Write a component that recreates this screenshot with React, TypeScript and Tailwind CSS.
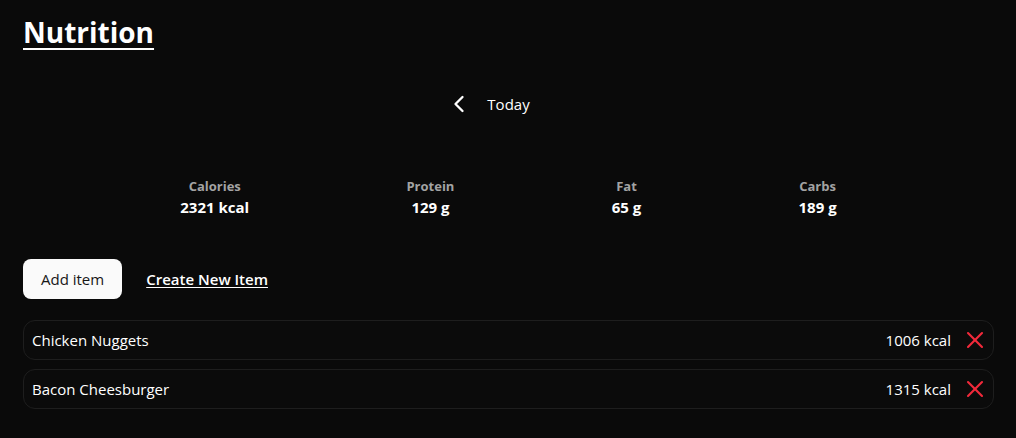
import { ChevronLeft, ChevronRight, X } from "lucide-react";

const stats = [
  { label: "Calories", value: "2321 kcal" },
  { label: "Protein", value: "129 g" },
  { label: "Fat", value: "65 g" },
  { label: "Carbs", value: "189 g" },
];

const items = [
  { name: "Chicken Nuggets", kcal: 1006 },
  { name: "Bacon Cheesburger", kcal: 1315 },
];

export default function App() {
  return (
    <div
      className="min-h-screen bg-[#0a0a0a] text-white pl-[23px] pr-[22px] pt-[12px]"
      style={{ fontFamily: '"Segoe UI", "Open Sans", sans-serif' }}
    >
      <h1 className="text-[28px] font-bold underline underline-offset-[5px] decoration-2 leading-[40px]">
        Nutrition
      </h1>

      <div className="flex items-center justify-center gap-[14px] mt-[40px] h-6">
        <button className="text-white">
          <ChevronLeft size={28} strokeWidth={2} />
        </button>
        <span className="text-[15px]">Today</span>
        {/* no next day when viewing today */}
        <span className="invisible">
          <ChevronRight size={28} />
        </span>
      </div>

      <div className="flex justify-evenly mt-[60px]">
        {stats.map((s) => (
          <div key={s.label} className="flex flex-col items-center">
            <span className="text-[13px] font-bold text-[#a3a3a3] leading-[20px]">
              {s.label}
            </span>
            <span className="text-[15px] font-bold leading-[22px]">
              {s.value}
            </span>
          </div>
        ))}
      </div>

      <div className="flex items-center gap-6 mt-[41px]">
        <button className="bg-[#fafafa] text-[#171717] rounded-lg h-10 px-[18px] text-[15px] font-medium">
          Add item
        </button>
        <a className="text-[15px] font-semibold underline underline-offset-2">
          Create New Item
        </a>
      </div>

      <div className="flex flex-col gap-[9px] mt-[21px]">
        {items.map((it) => (
          <div
            key={it.name}
            className="flex items-center justify-between h-10 pl-2 pr-[4px] rounded-xl border border-[#1e1e1e] bg-[#0b0b0b]"
          >
            <span className="text-[15px]">{it.name}</span>
            <div className="flex items-center gap-[10px]">
              <span className="text-[15px]">{it.kcal} kcal</span>
              <X size={28} className="text-[#f2293b]" strokeWidth={1.8} />
            </div>
          </div>
        ))}
      </div>
    </div>
  );
}
